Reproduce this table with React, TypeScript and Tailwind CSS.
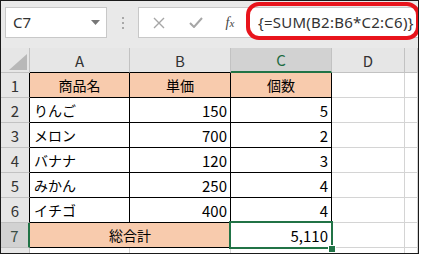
import React from "react";

const JP = { fontFamily: '"Noto Sans CJK JP", "Noto Sans", sans-serif' };

type Row = { name: string; price: string; qty: string };

const rows: Row[] = [
  { name: "りんご", price: "150", qty: "5" },
  { name: "メロン", price: "700", qty: "2" },
  { name: "バナナ", price: "120", qty: "3" },
  { name: "みかん", price: "250", qty: "4" },
  { name: "イチゴ", price: "400", qty: "4" },
];

function Toolbar() {
  return (
    <div className="relative h-[47px] shrink-0 bg-[#e9e9e9] flex items-start pt-[6px] pl-[4px]">
      {/* name box */}
      <div className="w-[102px] h-[31px] bg-white border border-[#c8c8c8] flex items-center justify-between pl-[7px] pr-[6px]">
        <span className="text-[15px] text-[#333] leading-none" style={{ fontFamily: '"Noto Sans", sans-serif' }}>
          C7
        </span>
        <svg width="9" height="5" viewBox="0 0 9 5">
          <path d="M0 0 L9 0 L4.5 5 Z" fill="#777" />
        </svg>
      </div>
      {/* grip dots */}
      <div className="w-[31px] h-[31px] flex flex-col items-center justify-center gap-[3px]">
        <span className="w-[2px] h-[2px] bg-[#a8a8a8]" />
        <span className="w-[2px] h-[2px] bg-[#a8a8a8]" />
        <span className="w-[2px] h-[2px] bg-[#a8a8a8]" />
      </div>
      {/* formula input */}
      <div className="flex-1 h-[31px] bg-white border border-[#c8c8c8] border-r-0 flex items-center">
        <div className="w-[38px] flex justify-center ml-[1px]">
          <svg width="12" height="12" viewBox="0 0 12 12">
            <path d="M1 1 L11 11 M11 1 L1 11" stroke="#a6a6a6" strokeWidth="1.4" />
          </svg>
        </div>
        <div className="w-[36px] flex justify-center">
          <svg width="14" height="11" viewBox="0 0 14 11">
            <path d="M1 6 L5 10 L13 1" stroke="#a6a6a6" strokeWidth="2" fill="none" />
          </svg>
        </div>
        <div className="w-[32px] flex justify-center">
          <span
            className="italic text-[14px] text-[#444] leading-none"
            style={{ fontFamily: '"Liberation Serif", serif' }}
          >
            f<span className="text-[11px]">x</span>
          </span>
        </div>
        <span
          className="ml-[12px] text-[15px] tracking-[0.25px] text-[#333] leading-none whitespace-nowrap"
          style={{ fontFamily: '"Noto Sans", sans-serif' }}
        >
          {"{=SUM(B2:B6*C2:C6)}"}
        </span>
      </div>
      {/* red highlight around the formula */}
      <div className="absolute left-[245px] top-[1px] w-[174px] h-[38px] border-[4px] border-[#e8141c] rounded-[13px] pointer-events-none" />
    </div>
  );
}

function ColHead({ label, selected, dataEdge }: { label: string; selected?: boolean; dataEdge?: boolean }) {
  const base = "flex items-center justify-center text-[15px] leading-none border-r border-[#c2c2c2]";
  const cls = selected
    ? `${base} bg-[#d2d2d2] text-[#1d6b42] border-b-2 border-b-[#217346]`
    : dataEdge
    ? `${base} bg-[#e6e6e6] text-[#333] border-b border-b-black`
    : `${base} bg-[#e6e6e6] text-[#333] border-b border-b-[#c2c2c2]`;
  return (
    <div className={cls} style={JP}>
      {label}
    </div>
  );
}

function RowHead({ label, selected, dataEdge = true }: { label: string; selected?: boolean; dataEdge?: boolean }) {
  const base = "flex items-center justify-center text-[15px] leading-none border-b border-[#c2c2c2]";
  const cls = selected
    ? `${base} bg-[#d2d2d2] text-[#3a4f45] border-r-2 border-r-[#217346]`
    : dataEdge
    ? `${base} bg-[#e6e6e6] text-[#333] border-r border-r-black`
    : `${base} bg-[#e6e6e6] text-[#333] border-r border-r-[#c2c2c2]`;
  return (
    <div className={cls} style={JP}>
      {label}
    </div>
  );
}

const cell = "border-r border-b border-black flex items-center text-[14px] leading-none text-black";
const num = "border-r border-b border-black flex items-center justify-end pr-[3px] text-[15px] leading-none text-black";
const empty = "border-r border-b border-[#d4d4d4] bg-white";

export default function App() {
  return (
    <div className="w-[421px] h-[255px] bg-white overflow-hidden">
      <div className="w-[419px] h-[254px] border border-[#1a1a1a] flex flex-col overflow-hidden bg-white">
        <Toolbar />
        <div className="grid grid-cols-[29px_100px_101px_101px_73px_1fr] grid-rows-[25px_repeat(8,25px)]">
          {/* header row */}
          <div className="bg-[#e6e6e6] border-r border-b border-[#c2c2c2] flex items-end justify-end pr-[2px] pb-[2px]">
            <svg width="18" height="16" viewBox="0 0 18 16">
              <path d="M18 0 L18 16 L0 16 Z" fill="#b8b8b8" />
            </svg>
          </div>
          <ColHead label="A" dataEdge />
          <ColHead label="B" dataEdge />
          <ColHead label="C" selected />
          <ColHead label="D" />
          <ColHead label="" />

          {/* row 1: headings */}
          <RowHead label="1" />
          <div className={`${cell} justify-center bg-[#f8cbad]`} style={JP}>商品名</div>
          <div className={`${cell} justify-center bg-[#f8cbad]`} style={JP}>単価</div>
          <div className={`${cell} justify-center bg-[#f8cbad]`} style={JP}>個数</div>
          <div className={empty} />
          <div className={empty} />

          {rows.map((r, i) => (
            <React.Fragment key={r.name}>
              <RowHead label={String(i + 2)} />
              <div className={`${cell} pl-[4px]`} style={JP}>{r.name}</div>
              <div className={num} style={JP}>{r.price}</div>
              <div className={num} style={JP}>{r.qty}</div>
              <div className={empty} />
              <div className={empty} />
            </React.Fragment>
          ))}

          {/* row 7: total */}
          <RowHead label="7" selected />
          <div className={`${cell} col-span-2 justify-center bg-[#f8cbad]`} style={JP}>総合計</div>
          <div className={`${num} relative`} style={JP}>
            5,110
            <span className="absolute left-[-2px] top-[-2px] w-[104px] h-[28px] border-2 border-[#217346] pointer-events-none" />
            <span className="absolute left-[97px] top-[22px] w-[6px] h-[6px] bg-[#217346] border border-white box-content pointer-events-none" />
          </div>
          <div className={empty} />
          <div className={empty} />

          {/* row 8, only its top edge shows */}
          <RowHead label="" dataEdge={false} />
          <div className={empty} />
          <div className={empty} />
          <div className={empty} />
          <div className={empty} />
          <div className={empty} />
        </div>
      </div>
    </div>
  );
}
